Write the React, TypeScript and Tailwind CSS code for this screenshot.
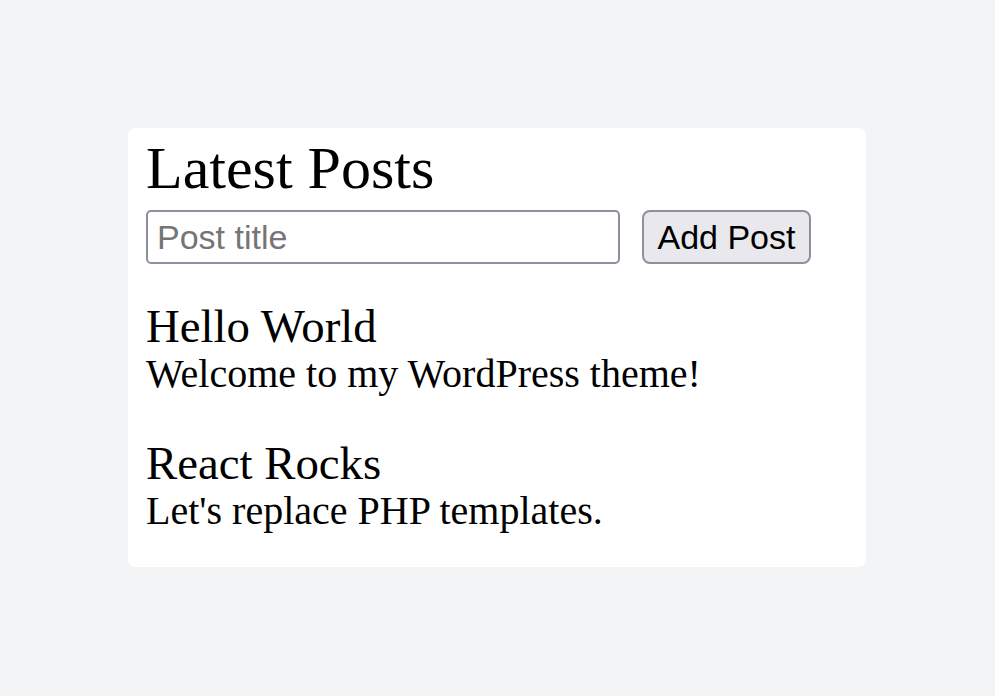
const posts = [
  { title: 'Hello World', body: 'Welcome to my WordPress theme!' },
  { title: 'React Rocks', body: "Let's replace PHP templates." },
];

export default function App() {
  return (
    <div className="min-h-[696px] w-full bg-[#f3f4f6] pt-[128px] font-['Liberation_Serif',serif] text-black">
      <div className="ml-[128px] w-[738px] rounded-lg bg-white px-[18px] pt-[7px] pb-[34px]">
        <h2 className="text-[60px] leading-[66px]">Latest Posts</h2>
        <div className="mt-[9px] flex items-center gap-[22px]">
          <input
            type="text"
            placeholder="Post title"
            className="h-[54px] w-[474px] rounded-[5px] border-[2.5px] border-[#8f8f9d] bg-white px-[9px] font-['Liberation_Sans',Arial,sans-serif] text-[34px] text-black placeholder:text-[#757575] outline-none"
          />
          <button className="h-[54px] w-[169px] rounded-[8px] border-[2.5px] border-[#8f8f9d] bg-[#e9e9ed] font-['Liberation_Sans',Arial,sans-serif] text-[34px] text-black">
            Add Post
          </button>
        </div>
        <div className="mt-[36px] flex flex-col gap-[41px]">
          {posts.map((p) => (
            <div key={p.title}>
              <h3 className="text-[46.8px] leading-[52px]">{p.title}</h3>
              <p className="text-[40px] leading-[44px]">{p.body}</p>
            </div>
          ))}
        </div>
      </div>
    </div>
  );
}
